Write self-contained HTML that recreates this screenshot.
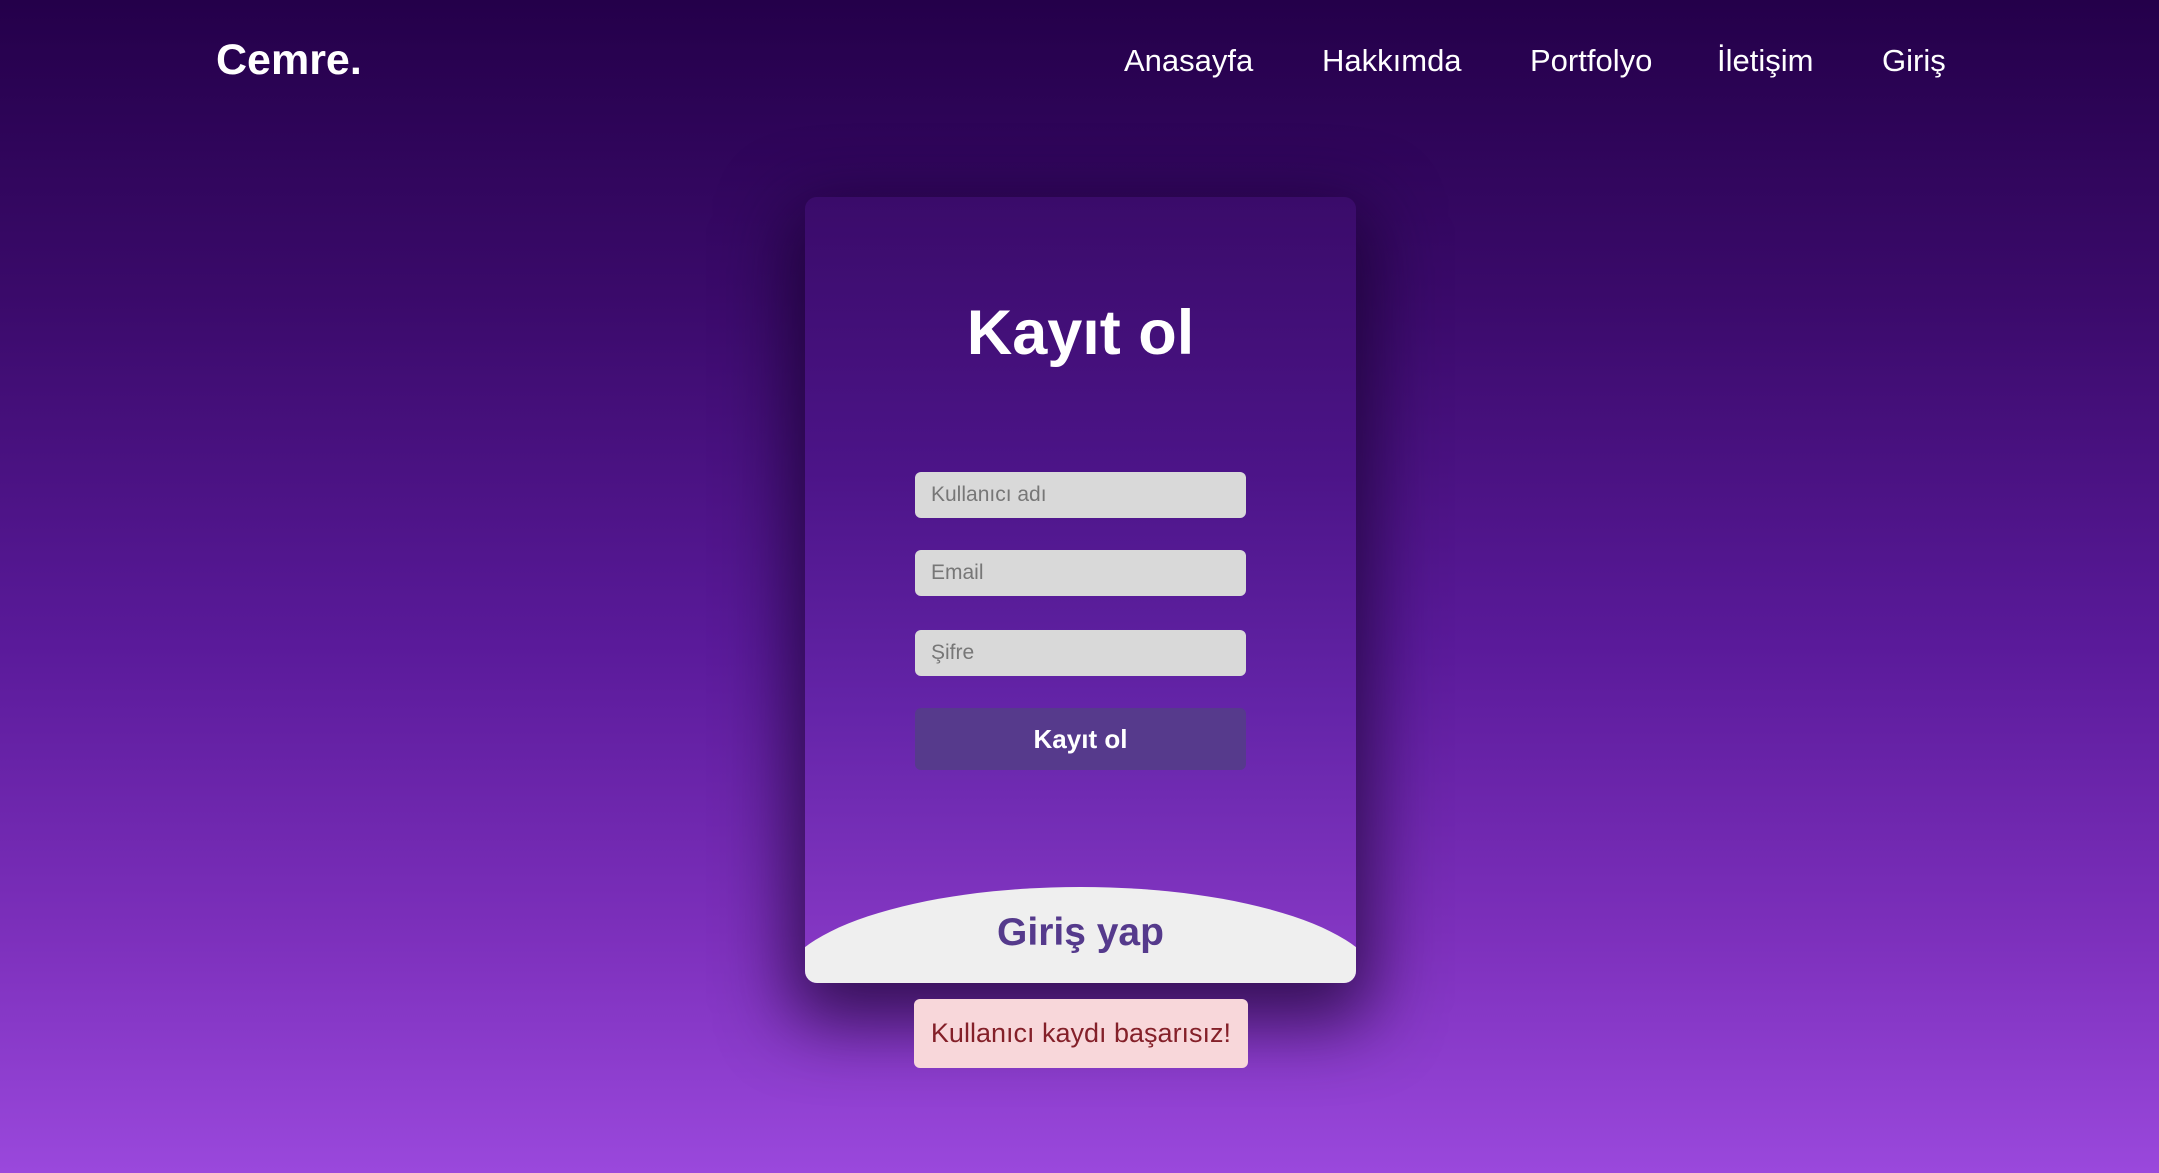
<!DOCTYPE html>
<html><head><meta charset="utf-8"><style>
*{margin:0;padding:0;box-sizing:border-box}
body{width:2159px;height:1173px;overflow:hidden;font-family:"Liberation Sans",sans-serif;background:linear-gradient(180deg,#24004a 0%,#3a0a6a 25%,#5a1a9a 55%,#7d30bc 80%,#9a48dc 100%);position:relative;color:#fff}
.logo{position:absolute;left:216px;top:36px;font-size:43px;font-weight:bold;letter-spacing:0px}
.nav{position:absolute;top:43px;font-size:31px}
.card{position:absolute;left:805px;top:197px;width:551px;height:786px;border-radius:12px;overflow:hidden;background:linear-gradient(180deg,#3a0b6a 0%,#4c1488 35%,#6424a8 65%,#8a3ac8 100%);box-shadow:0 25px 70px 15px rgba(20,0,40,0.7)}
.title{position:absolute;top:100px;width:100%;text-align:center;font-size:63px;font-weight:bold}
.inp{position:absolute;left:110px;width:331px;height:46px;background:#d9d9d9;border-radius:6px;color:#777;font-size:21px;padding-left:16px;line-height:46px}
.btn{position:absolute;left:110px;top:511px;width:331px;height:62px;background:#563a8c;border-radius:6px;text-align:center;line-height:62px;font-size:26px;font-weight:bold}
.ell{position:absolute;left:-25px;width:601px;top:690px;height:200px;border-radius:50%;background:#efefef}
.gy{position:absolute;top:714px;width:100%;text-align:center;font-size:39px;font-weight:bold;color:#553a8c}
.alert{position:absolute;left:914px;top:999px;width:334px;height:69px;background:#f8d7da;border-radius:6px;color:#842029;font-size:27px;text-align:center;line-height:69px}
</style></head><body>
<div class="logo">Cemre.</div>
<div class="nav" style="left:1124px">Anasayfa</div>
<div class="nav" style="left:1322px">Hakkımda</div>
<div class="nav" style="left:1530px">Portfolyo</div>
<div class="nav" style="left:1717px">İletişim</div>
<div class="nav" style="left:1882px">Giriş</div>
<div class="card">
<div class="title">Kayıt ol</div>
<div class="inp" style="top:275px">Kullanıcı adı</div>
<div class="inp" style="top:353px">Email</div>
<div class="inp" style="top:433px">Şifre</div>
<div class="btn">Kayıt ol</div>
<div class="ell"></div>
<div class="gy">Giriş yap</div>
</div>
<div class="alert">Kullanıcı kaydı başarısız!</div>
</body></html>
